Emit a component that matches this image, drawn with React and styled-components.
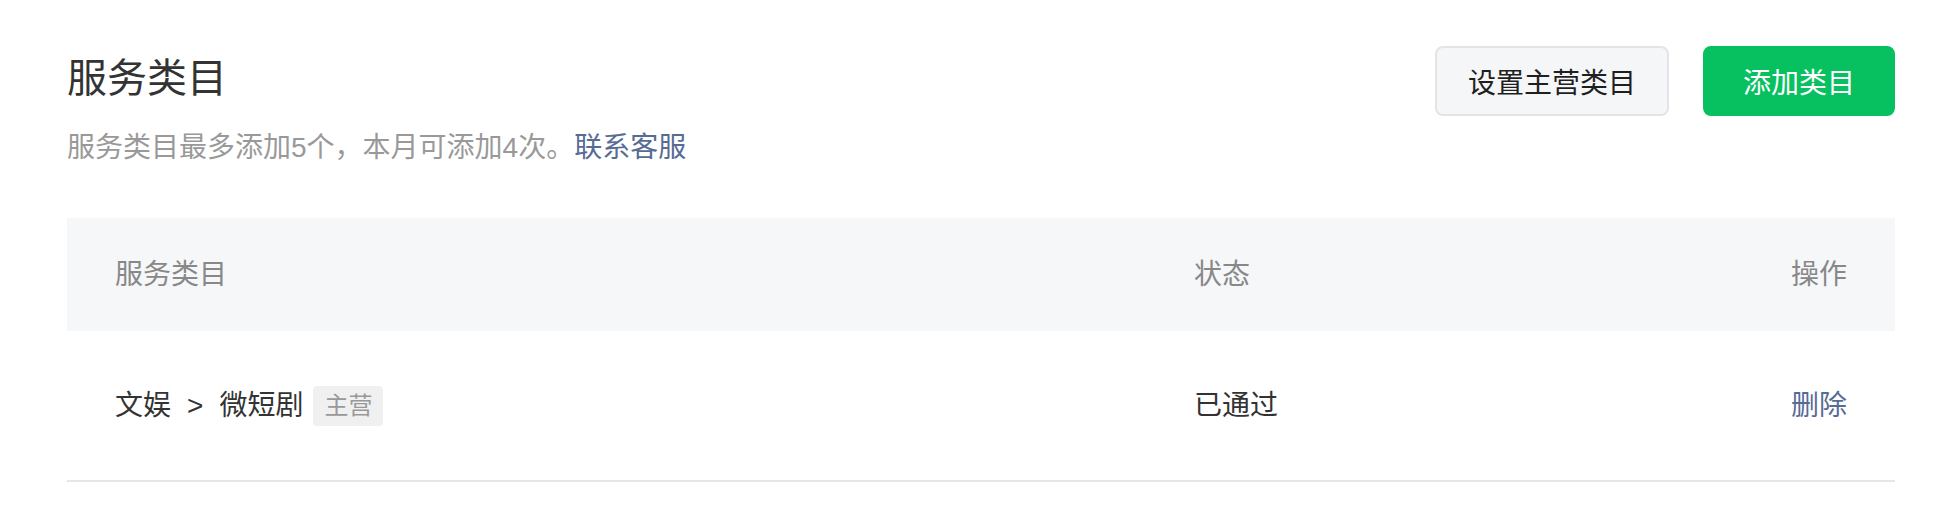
import React from 'react';
import styled, { createGlobalStyle } from 'styled-components';

//Styles
const GlobalStyle = createGlobalStyle`
  body {
    margin: 0;
    background: #ffffff;
    font-family: 'Liberation Sans', 'Noto Sans CJK SC', sans-serif;
    -webkit-font-smoothing: antialiased;
  }
`;

const StyledPage = styled.div`
  width: 1828px;
  padding: 46px 0 0 67px;
`;

const StyledHeader = styled.div`
  display: flex;
  justify-content: space-between;
  align-items: flex-start;
`;

const StyledTitle = styled.h1`
  margin: 4px 0 0;
  font-size: 40px;
  line-height: 56px;
  font-weight: normal;
  color: #333333;
`;

const StyledDesc = styled.p`
  margin: 22px 0 0;
  font-size: 28px;
  line-height: 40px;
  color: #999999;
`;

const StyledLink = styled.a`
  color: #576b95;
  text-decoration: none;
`;

const StyledActions = styled.div`
  display: flex;
  gap: 34px;
`;

const StyledButton = styled.button`
  height: 70px;
  padding: 0 ${({ $primary }) => ($primary ? '38px' : '31px')};
  border-radius: 8px;
  font-family: inherit;
  font-size: 28px;
  border: 2px solid ${({ $primary }) => ($primary ? '#07c160' : '#e2e4e7')};
  background: ${({ $primary }) => ($primary ? '#07c160' : '#f5f6f8')};
  color: ${({ $primary }) => ($primary ? '#ffffff' : '#1f1f1f')};
`;

const StyledTable = styled.div`
  margin-top: 50px;
`;

const StyledRow = styled.div`
  display: grid;
  grid-template-columns: 1079px 1fr auto;
  align-items: center;
  padding: 0 48px;
  height: ${({ $head }) => ($head ? '113px' : '149px')};
  background: ${({ $head }) => ($head ? '#f6f7f9' : '#ffffff')};
  border-bottom: ${({ $head }) => ($head ? 'none' : '2px solid #e6e6e8')};
  font-size: 28px;
  line-height: 40px;
  color: ${({ $head }) => ($head ? '#888888' : '#333333')};
`;

const StyledCategory = styled.div`
  display: flex;
  align-items: center;
`;

const StyledArrow = styled.span`
  margin: 0 16px;
`;

const StyledTag = styled.span`
  margin-left: 10px;
  height: 40px;
  padding: 0 11px;
  border-radius: 4px;
  background: #f0f0f0;
  color: #999999;
  font-size: 24px;
  line-height: 40px;
`;

const StyledDelete = styled(StyledLink)`
  text-align: right;
`;

const App = () => {
  return (
    <StyledPage>
      <GlobalStyle />
      <StyledHeader>
        <div>
          <StyledTitle>服务类目</StyledTitle>
          <StyledDesc>
            服务类目最多添加5个，本月可添加4次。<StyledLink href="#">联系客服</StyledLink>
          </StyledDesc>
        </div>
        <StyledActions>
          <StyledButton>设置主营类目</StyledButton>
          <StyledButton $primary>添加类目</StyledButton>
        </StyledActions>
      </StyledHeader>
      <StyledTable>
        <StyledRow $head>
          <span>服务类目</span>
          <span>状态</span>
          <span>操作</span>
        </StyledRow>
        <StyledRow>
          <StyledCategory>
            文娱<StyledArrow>&gt;</StyledArrow>微短剧
            <StyledTag>主营</StyledTag>
          </StyledCategory>
          <span>已通过</span>
          <StyledDelete href="#">删除</StyledDelete>
        </StyledRow>
      </StyledTable>
    </StyledPage>
  );
};

export default App;
